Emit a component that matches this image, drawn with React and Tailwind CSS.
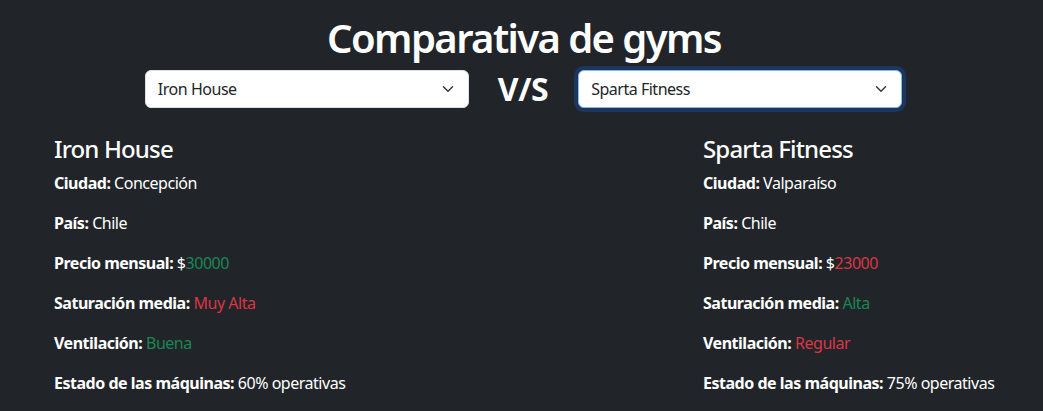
import { useState } from "react"

const gyms = {
  iron: {
    name: "Iron House",
    ciudad: "Concepción",
    pais: "Chile",
    precio: 30000,
    precioColor: "text-[#198754]",
    saturacion: "Muy Alta",
    saturacionColor: "text-[#dc3545]",
    ventilacion: "Buena",
    ventilacionColor: "text-[#198754]",
    maquinas: "60% operativas",
  },
  sparta: {
    name: "Sparta Fitness",
    ciudad: "Valparaíso",
    pais: "Chile",
    precio: 23000,
    precioColor: "text-[#dc3545]",
    saturacion: "Alta",
    saturacionColor: "text-[#198754]",
    ventilacion: "Regular",
    ventilacionColor: "text-[#dc3545]",
    maquinas: "75% operativas",
  },
}

function GymSelect({ value, onChange, focused }) {
  return (
    <div className="relative w-[324px]">
      <select
        value={value}
        onChange={(e) => onChange(e.target.value)}
        className={`appearance-none w-full h-[38px] bg-white text-[#212529] text-base rounded-[6px] pl-3 pr-9 border outline-none ${
          focused ? "border-[#86b7fe] shadow-[0_0_0_4px_rgba(13,110,253,0.25)]" : "border-[#dee2e6]"
        }`}
      >
        <option value="iron">Iron House</option>
        <option value="sparta">Sparta Fitness</option>
      </select>
      <svg
        className="pointer-events-none absolute right-[13px] top-1/2 -translate-y-1/2"
        width="16"
        height="12"
        viewBox="0 0 16 16"
        fill="none"
        stroke="#343a40"
        strokeWidth="2"
        strokeLinecap="round"
        strokeLinejoin="round"
      >
        <path d="m2 5 6 6 6-6" />
      </svg>
    </div>
  )
}

function Field({ label, children }) {
  return (
    <p className="mb-4 leading-6">
      <strong className="font-bold">{label}:</strong> {children}
    </p>
  )
}

function GymCard({ gym }) {
  return (
    <div>
      <h3 className="text-[24px] font-medium leading-[1.2] mb-[7px] tracking-[-0.035em]">{gym.name}</h3>
      <Field label="Ciudad">{gym.ciudad}</Field>
      <Field label="País">{gym.pais}</Field>
      <Field label="Precio mensual">
        $<span className={gym.precioColor}>{gym.precio}</span>
      </Field>
      <Field label="Saturación media">
        <span className={gym.saturacionColor}>{gym.saturacion}</span>
      </Field>
      <Field label="Ventilación">
        <span className={gym.ventilacionColor}>{gym.ventilacion}</span>
      </Field>
      <Field label="Estado de las máquinas">{gym.maquinas}</Field>
    </div>
  )
}

export default function App() {
  const [left, setLeft] = useState("iron")
  const [right, setRight] = useState("sparta")

  return (
    <div className="min-h-screen bg-[#212529] text-white font-['Noto_Sans',sans-serif] tracking-[-0.03em]">
      <h1 className="text-center text-[40px] font-semibold leading-[1.2] pt-[14px] pl-[5px] tracking-[-0.04em]">
        Comparativa de gyms
      </h1>
      <div className="flex justify-center items-center gap-[29px] mt-[8px] pl-[4px]">
        <GymSelect value={left} onChange={setLeft} />
        <h2 className="text-[32px] font-bold leading-[1.2] mr-[1px]">V/S</h2>
        <GymSelect value={right} onChange={setRight} focused />
      </div>
      <div className="flex pl-[54px] pt-[27px]">
        <div className="w-[649px]">
          <GymCard gym={gyms[left]} />
        </div>
        <GymCard gym={gyms[right]} />
      </div>
    </div>
  )
}
